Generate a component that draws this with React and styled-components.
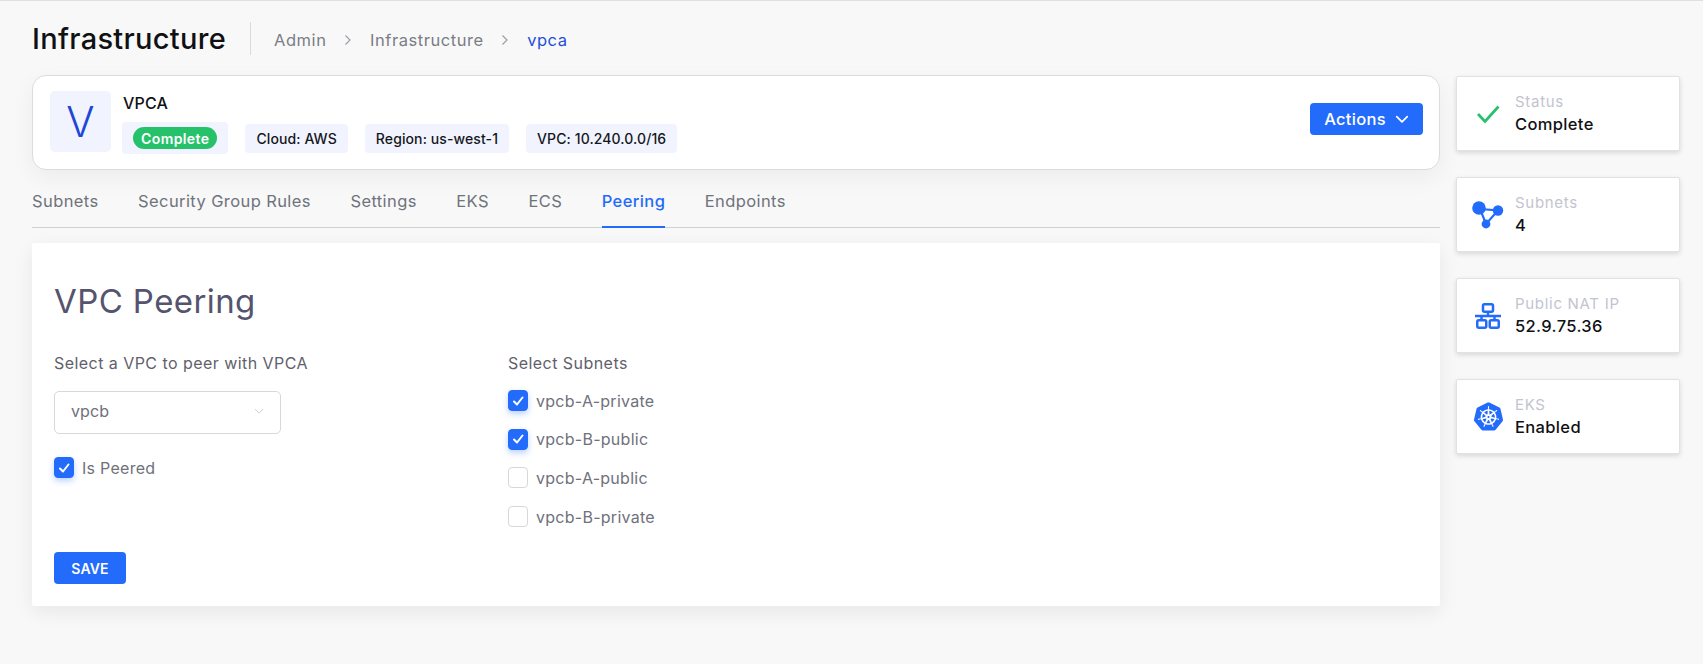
import React from 'react';
import styled, { createGlobalStyle } from 'styled-components';
import { SiKubernetes } from 'react-icons/si';

const Global = createGlobalStyle`
  html, body { margin: 0; padding: 0; background: #f8f8f8; }
  body { font-family: Inter, "Liberation Sans", sans-serif; border-top: 1px solid #e0e0e0; overflow: hidden; }
  * { box-sizing: border-box; }
`;
const Page = styled.div`
  display: grid; grid-template-columns: 1408px 224px; column-gap: 16px;
  padding: 0 23px 0 32px; height: 663px;
`;
const Main = styled.div`display: flex; flex-direction: column;`;
const Header = styled.div`display: flex; align-items: center; height: 74px; padding-top: 1px;`;
const Title = styled.h1`
  margin: 0; font-size: 29px; font-weight: 500; color: #101114; letter-spacing: 0.3px;
  padding-right: 24px; margin-right: 23px; border-right: 1px solid #d5dbe1; line-height: 33px;
`;
const Crumb = styled.span`
  font-size: 16.5px; color: ${p => p.$active ? '#1f4fd8' : '#7a7d85'}; letter-spacing: 0.55px; padding-top: 3px;
`;
const Sep = styled.span`
  display: inline-flex; width: 43.5px; justify-content: center; padding-top: 3px;
`;
const Card = styled.div`
  display: flex; align-items: center; justify-content: space-between; height: 95px; padding: 0 16px 0 17px;
  background: #fff; border: 1px solid #dcdcdc; border-radius: 14px;
  box-shadow: 0 8px 24px rgba(0,0,0,.05);
`;
const Left = styled.div`display: flex; gap: 11px; align-items: flex-start;`;
const Avatar = styled.div`
  width: 61px; height: 61px; border-radius: 5px; background: #f1f4fe; color: #1f46d6;
  display: flex; align-items: center; justify-content: center; font-size: 42px; font-weight: 350;
`;
const Name = styled.div`font-size: 16px; font-weight: 500; color: #101114; line-height: 20px; margin: 2px 0 9px 1px; letter-spacing: 0.2px;`;
const Chips = styled.div`display: flex; align-items: center; gap: 17px;`;
const Chip = styled.div`
  height: 29px; padding: 0 11px; display: flex; align-items: center; border-radius: 4px;
  background: #f1f4fe; color: #15171c; font-size: 14px; font-weight: 500; letter-spacing: 0.1px;
`;
const StatusChip = styled(Chip)`height: 32px; padding: 0 11px;`;
const Badge = styled.span`
  background: #26c26b; color: #fff; border-radius: 11px; height: 22px; padding: 0 8px;
  display: flex; align-items: center; font-size: 14px; font-weight: 600; letter-spacing: 0.4px;
`;
const ActionButton = styled.button`
  display: flex; align-items: center; gap: 9px; width: 113px; height: 32px; justify-content: center; margin-bottom: 8px;
  border: 0; border-radius: 4px; background: #236bfa; color: #fff; font: 500 16.5px Inter, sans-serif; letter-spacing: 0.3px;
`;
const Tabs = styled.div`
  display: flex; gap: 39.5px; height: 58px; border-bottom: 1px solid #cfd1d3; margin-bottom: 15px;
`;
const Tab = styled.div`
  display: flex; align-items: center; padding-top: 5px; font-size: 16.5px; letter-spacing: 0.4px; margin-bottom: -1px;
  font-weight: ${p => p.$active ? 500 : 400};
  color: ${p => p.$active ? '#236bfa' : '#6f737b'};
  border-bottom: 2px solid ${p => p.$active ? '#236bfa' : 'transparent'};
`;
const Panel = styled.div`
  background: #fff; height: 363px; padding: 38px 22px 0; border-radius: 2px;
  box-shadow: 0 6px 20px rgba(0,0,0,.07);
`;
const PanelTitle = styled.h2`
  margin: 0 0 32px; font-size: 33px; font-weight: 400; color: #55536d; line-height: 40px; letter-spacing: 0.4px;
`;
const Columns = styled.div`display: grid; grid-template-columns: 454px 1fr;`;
const Col = styled.div`display: flex; flex-direction: column;`;
const Label = styled.div`font-size: 16px; color: #5f616c; line-height: 20px; letter-spacing: 0.45px;`;
const Select = styled.div`
  width: 227px; height: 43px; margin: 18px 0 23px; padding: 0 16px 3px; border: 1px solid #d8d8d8; border-radius: 5px;
  display: flex; align-items: center; justify-content: space-between; font-size: 16px; color: #6f717b; letter-spacing: 0.1px;
`;
const Check = styled.label`
  display: flex; align-items: center; gap: 8px; height: 21px; font-size: 16px; color: #6f717b; letter-spacing: 0.27px;
`;
const Box = styled.span`
  width: 20px; height: 21px; border-radius: 4px; display: flex; align-items: center; justify-content: center;
  background: ${p => p.$on ? '#236bfa' : '#fff'};
  border: 1px solid ${p => p.$on ? '#236bfa' : '#d8d8d8'};
  box-shadow: ${p => p.$on ? '0 3px 6px rgba(35,107,250,.3)' : 'none'};
`;
const SubnetList = styled.div`display: flex; flex-direction: column; gap: 17.7px; margin-top: 17px;`;
const Save = styled.button`
  display: block; margin-top: 25px; width: 72px; height: 32px; border: 0; border-radius: 4px; background: #236bfa; color: #fff;
  font: 600 14px Inter, sans-serif; letter-spacing: 0.2px;
`;
const Side = styled.div`display: flex; flex-direction: column; gap: 26px; padding-top: 75px;`;
const Stat = styled.div`
  height: 75px; background: #fff; border: 1px solid #e2e2e2; border-radius: 2px; display: flex; align-items: center;
  box-shadow: 0 2px 5px rgba(0,0,0,.13);
`;
const IconSlot = styled.div`width: 58px; display: flex; justify-content: center; padding-left: 4px; color: #236bfa; flex: none;`;
const StatLabel = styled.div`font-size: 15px; color: #c3c4cf; line-height: 20px; letter-spacing: 0.7px;`;
const StatValue = styled.div`font-size: 16.5px; font-weight: 500; color: #101114; line-height: 24px; letter-spacing: 0.35px;`;

const CheckMark = () => (
  <svg width="12" height="12" viewBox="0 0 12 12" fill="none" stroke="#fff" strokeWidth="2" strokeLinecap="round" strokeLinejoin="round"><path d="M2 6.5 5 9.5 10.5 2.5" /></svg>
);
const Chevron = ({ size = 14, color = '#fff', w = 1.5 }) => (
  <svg width={size} height={size} viewBox="0 0 12 12" fill="none" stroke={color} strokeWidth={w} strokeLinecap="round" strokeLinejoin="round"><path d="M1.5 4 6 8.5 10.5 4" /></svg>
);
const CrumbArrow = () => (
  <svg width="8" height="12" viewBox="0 0 8 12" fill="none" stroke="#9a9ea6" strokeWidth="1.2"><path d="M1.5 1.5 6 6 1.5 10.5" /></svg>
);
const TickIcon = () => (
  <svg width="26" height="22" viewBox="0 0 26 22" fill="none" stroke="#26c26b" strokeWidth="2.7"><path d="M3 11 10 18.5 23.5 3.5" /></svg>
);
const NodesIcon = () => (
  <svg width="32" height="28" viewBox="0 0 32 28" fill="#236bfa" stroke="#236bfa">
    <path d="M8 8 26 9.5 14 23Z" fill="none" strokeWidth="2.2" />
    <circle cx="7" cy="7" r="6.8" stroke="none" />
    <circle cx="26" cy="9.5" r="5.2" stroke="none" />
    <circle cx="14" cy="23" r="4.4" stroke="none" />
  </svg>
);
const NetworkIcon = () => (
  <svg width="26" height="26" viewBox="0 0 26 26" fill="none" stroke="#236bfa" strokeWidth="2.5">
    <rect x="8" y="1.25" width="10" height="7.5" rx="1.4" />
    <path d="M13 8.7V13M0 13H26M6.5 13V17.5M19.5 13V17.5" />
    <rect x="2.25" y="17.25" width="9" height="7.5" rx="1.4" />
    <rect x="14.75" y="17.25" width="9" height="7.5" rx="1.4" />
  </svg>
);

const stats = [
  { label: 'Status', value: 'Complete', icon: <TickIcon /> },
  { label: 'Subnets', value: '4', icon: <NodesIcon /> },
  { label: 'Public NAT IP', value: '52.9.75.36', icon: <NetworkIcon /> },
  { label: 'EKS', value: 'Enabled', icon: <SiKubernetes size={29} /> },
];
const tabs = ['Subnets', 'Security Group Rules', 'Settings', 'EKS', 'ECS', 'Peering', 'Endpoints'];
const subnets = [['vpcb-A-private', true], ['vpcb-B-public', true], ['vpcb-A-public', false], ['vpcb-B-private', false]];

export default function App() {
  return (
    <>
      <Global />
      <Page>
        <Main>
          <Header>
            <Title>Infrastructure</Title>
            <Crumb>Admin</Crumb>
            <Sep><CrumbArrow /></Sep>
            <Crumb>Infrastructure</Crumb>
            <Sep><CrumbArrow /></Sep>
            <Crumb $active>vpca</Crumb>
          </Header>
          <Card>
            <Left>
              <Avatar>V</Avatar>
              <div>
                <Name>VPCA</Name>
                <Chips>
                  <StatusChip><Badge>Complete</Badge></StatusChip>
                  <Chip>Cloud: AWS</Chip>
                  <Chip>Region: us-west-1</Chip>
                  <Chip>VPC: 10.240.0.0/16</Chip>
                </Chips>
              </div>
            </Left>
            <ActionButton>Actions <Chevron /></ActionButton>
          </Card>
          <Tabs>
            {tabs.map(t => <Tab key={t} $active={t === 'Peering'}>{t}</Tab>)}
          </Tabs>
          <Panel>
            <PanelTitle>VPC Peering</PanelTitle>
            <Columns>
              <Col>
                <Label>Select a VPC to peer with VPCA</Label>
                <Select>vpcb <Chevron size={10} color="#c4c6cc" w={1} /></Select>
                <Check><Box $on><CheckMark /></Box>Is Peered</Check>
              </Col>
              <Col>
                <Label>Select Subnets</Label>
                <SubnetList>
                  {subnets.map(([n, on]) => <Check key={n}><Box $on={on}>{on && <CheckMark />}</Box>{n}</Check>)}
                </SubnetList>
              </Col>
            </Columns>
            <Save>SAVE</Save>
          </Panel>
        </Main>
        <Side>
          {stats.map(s => (
            <Stat key={s.label}>
              <IconSlot>{s.icon}</IconSlot>
              <div>
                <StatLabel>{s.label}</StatLabel>
                <StatValue>{s.value}</StatValue>
              </div>
            </Stat>
          ))}
        </Side>
      </Page>
    </>
  );
}
